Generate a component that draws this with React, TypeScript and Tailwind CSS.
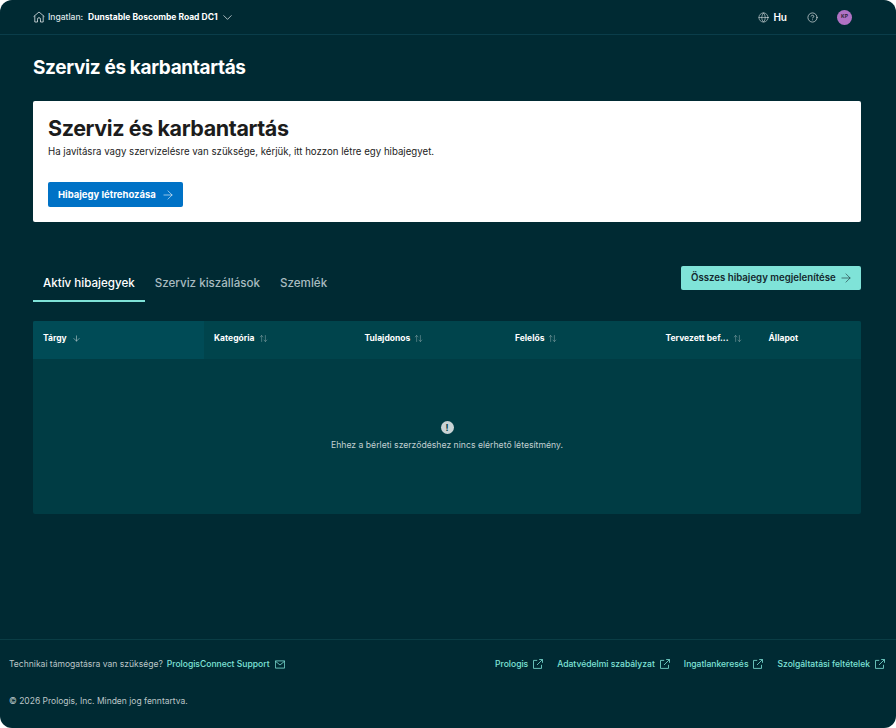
import { ArrowDown, ArrowRight, ArrowUpDown, ChevronDown, CircleHelp, Globe } from 'lucide-react'

const columns = [
  { name: 'Kategória', width: 'w-[150.5px]' },
  { name: 'Tulajdonos', width: 'w-[150.5px]' },
  { name: 'Felelős', width: 'w-[150.5px]' },
  { name: 'Tervezett bef...', width: 'w-[103px]' },
]

const footerLinks = ['Prologis', 'Adatvédelmi szabályzat', 'Ingatlankeresés', 'Szolgáltatási feltételek']

function HomeIcon() {
  return (
    <svg width="12" height="12" viewBox="0 0 12 12" fill="none" stroke="currentColor" strokeWidth="0.8" className="mr-[3px]">
      <path d="M0.6 5.6 6 1l5.4 4.6" />
      <path d="M1.8 4.8V11h2.7V8.2a1.5 1.5 0 0 1 3 0V11h2.7V4.8" />
    </svg>
  )
}

function ExternalIcon() {
  return (
    <svg width="10" height="10" viewBox="0 0 10 10" fill="none" stroke="currentColor" strokeWidth="0.8" className="ml-[5px]">
      <path d="M4.2 1.4H0.5v8h8V5.8" />
      <path d="M4 6 9.4 0.6M6.2 0.5h3.3v3.3" />
    </svg>
  )
}

function MailIcon() {
  return (
    <svg width="10" height="9" viewBox="0 0 10 9" fill="none" stroke="currentColor" strokeWidth="0.8" className="ml-[5px] text-[#7fe3d8]">
      <path d="M0.4 0.9h9.2v7.2H0.4z" />
      <path d="M0.4 1.2 5 5l4.6-3.8" />
    </svg>
  )
}

export default function App() {
  return (
    <div className="h-[728px] w-[896px] bg-white font-['Inter',sans-serif]">
      <div className="flex h-full flex-col overflow-hidden rounded-[12px] bg-[#002a33]">
        {/* Top bar */}
        <header className="flex h-[35px] shrink-0 items-center justify-between border-b border-[#0a3d4a] pl-[33px] pr-[44px]">
          <div className="flex items-center text-[#dfe6e8]">
            <HomeIcon />
            <span className="mr-[5px] text-[8.5px] font-medium">Ingatlan:</span>
            <span className="text-[8.5px] font-bold text-white">Dunstable Boscombe Road DC1</span>
            <ChevronDown size={15} strokeWidth={1.2} className="ml-[2px]" />
          </div>
          <div className="flex items-center">
            <Globe size={11} strokeWidth={1.25} className="mr-[4px] text-[#dfe6e8]" />
            <span className="mr-[20px] pt-[1px] text-[10px] font-semibold text-white">Hu</span>
            <CircleHelp size={11} strokeWidth={1.5} className="mr-[19px] text-[#dfe6e8]" />
            <div className="flex h-[15px] w-[15px] items-center justify-center rounded-full bg-[#b072c4] text-[5px] font-bold text-[#2b2233]">
              KP
            </div>
          </div>
        </header>

        <main className="flex flex-1 flex-col pl-[33px] pr-[35px]">
          <h1 className="mt-[19px] text-[19px] leading-[28px] font-bold tracking-[-0.35px] text-white">Szerviz és karbantartás</h1>

          {/* Intro card */}
          <section className="mt-[19px] h-[121px] rounded-[2px] bg-white px-[15px] pt-[14px]">
            <h2 className="text-[21.5px] leading-[26px] font-bold tracking-[-0.4px] text-[#1c1c1c]">Szerviz és karbantartás</h2>
            <p className="mt-[3px] text-[9.67px] leading-[15px] text-[#232323]">
              Ha javításra vagy szervizelésre van szüksége, kérjük, itt hozzon létre egy hibajegyet.
            </p>
            <button className="mt-[23px] flex h-[25px] w-[135px] items-center rounded-[2px] bg-[#0072c6] pl-[10px] pt-[1px] text-[9.5px] font-bold text-white">
              Hibajegy létrehozása
              <ArrowRight size={14} strokeWidth={1} className="ml-[5px]" />
            </button>
          </section>

          {/* Tabs */}
          <div className="mt-[44px] flex items-center justify-between">
            <div className="flex text-[11.6px] font-medium">
              <div className="h-[36px] border-b-2 border-[#7fe3d8] px-[10px] pt-[9px] text-white">Aktív hibajegyek</div>
              <div className="px-[10px] pt-[9px] text-[#a9bcc0]">Szerviz kiszállások</div>
              <div className="px-[10px] pt-[9px] text-[#a9bcc0]">Szemlék</div>
            </div>
            <button className="mb-[12px] flex h-[24px] w-[180px] items-center rounded-[2px] bg-[#7fe3d8] pl-[10px] text-[9.67px] font-semibold text-[#14282e]">
              Összes hibajegy megjelenítése
              <ArrowRight size={14} strokeWidth={1} className="ml-[3px]" />
            </button>
          </div>

          {/* Table */}
          <section className="mt-[19px] overflow-hidden rounded-[2px] bg-[#003c44]">
            <div className="flex h-[38px] bg-[#00444c] text-[8.5px] font-bold text-white">
              <div className="flex w-[171px] items-center bg-[#004b56] pb-[4px] pl-[10px]">
                Tárgy
                <ArrowDown size={9} strokeWidth={1.5} className="ml-[5px] text-[#c5d3d5]" />
              </div>
              {columns.map((col) => (
                <div key={col.name} className={`flex items-center pb-[4px] pl-[10px] ${col.width}`}>
                  {col.name}
                  <ArrowUpDown size={9} strokeWidth={1.25} className="ml-[4px] text-[#9db3b6]" />
                </div>
              ))}
              <div className="flex items-center pb-[4px] pl-[10px]">Állapot</div>
            </div>
            <div className="flex h-[155px] flex-col items-center pt-[62px]">
              <div className="flex h-[13px] w-[13px] items-center justify-center rounded-full bg-[#c9d3d5] text-[9px] leading-none font-bold text-[#003c44]">
                !
              </div>
              <p className="mt-[4px] text-[8.66px] leading-[14px] text-[#c2d0d2]">
                Ehhez a bérleti szerződéshez nincs elérhető létesítmény.
              </p>
            </div>
          </section>
        </main>

        {/* Footer */}
        <footer className="h-[89px] shrink-0 border-t border-[#0a3d45] pl-[9px] pr-[11px]">
          <div className="mt-[18px] flex items-center justify-between">
            <div className="flex items-center text-[8.55px]">
              <span className="text-[#bcc6c8]">Technikai támogatásra van szüksége?</span>
              <span className="ml-[4px] font-medium text-[#7fe3d8]">PrologisConnect Support</span>
              <MailIcon />
            </div>
            <div className="flex items-center gap-[14px] text-[8.55px] font-medium text-[#7fe3d8]">
              {footerLinks.map((link) => (
                <div key={link} className="flex items-center">
                  {link}
                  <ExternalIcon />
                </div>
              ))}
            </div>
          </div>
          <p className="mt-[23px] text-[8.5px] leading-[14px] text-[#bcc6c8]">© 2026 Prologis, Inc. Minden jog fenntartva.</p>
        </footer>
      </div>
    </div>
  )
}
